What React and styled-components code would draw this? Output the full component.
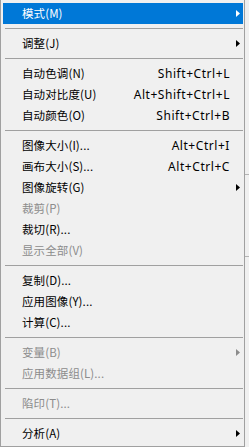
import React from "react";
import styled, { createGlobalStyle } from "styled-components";

const GlobalStyle = createGlobalStyle`
    html, body {
        margin: 0;
        padding: 0;
        background: #f0f0f0;
    }
    body {
        font-family: "Noto Sans CJK SC", "Noto Sans", sans-serif;
        font-size: 11.5px;
    }
`

const StyledPage = styled.div`
    display: flex;
    width: 249px;
    height: 447px;
    overflow: hidden;
`

const StyledMenu = styled.div`
    width: 245px;
    box-sizing: border-box;
    height: 447px;
    padding: 3px 1px 1px 2px;
    border-left: 1px solid #a0a0a0;
    border-right: 1px solid #a0a0a0;
    border-bottom: 1px solid #a0a0a0;
    background: #f0f0f0;
`

const StyledBehind = styled.div`
    flex: 1;
    display: flex;
    flex-direction: column;
`

const StyledTick = styled.div`
    height: 1px;
    margin-top: ${props => props.top}px;
    background: #b4b4b4;
`

const StyledItem = styled.div`
    display: grid;
    grid-template-columns: 1fr auto 13px;
    align-items: center;
    height: 21px;
    padding-left: 19px;
    background: ${props => props.active ? '#0078d7' : 'transparent'};
    color: ${props => props.active ? '#fff' : props.disabled ? '#8c8c8c' : '#000'};
    white-space: nowrap;
    line-height: 21px;
`

const StyledLabel = styled.span`
    letter-spacing: 0.1px;
`

const StyledShortcut = styled.span`
    text-align: right;
    font-family: "Noto Sans", "Noto Sans CJK SC", sans-serif;
    font-size: 12px;
    letter-spacing: 0.55px;
`

const StyledArrow = styled.svg`
    margin-left: 6px;
    display: block;
`

const StyledSeparator = styled.div`
    height: 9px;
    display: flex;
    align-items: center;
    padding-left: 2px;
    &::after {
        content: '';
        flex: 1;
        height: 1px;
        background: #a0a0a0;
    }
`

const menu = [
    {label: '模式(M)', sub: true, active: true},
    '-',
    {label: '调整(J)', sub: true},
    '-',
    {label: '自动色调(N)', key: 'Shift+Ctrl+L'},
    {label: '自动对比度(U)', key: 'Alt+Shift+Ctrl+L'},
    {label: '自动颜色(O)', key: 'Shift+Ctrl+B'},
    '-',
    {label: '图像大小(I)...', key: 'Alt+Ctrl+I'},
    {label: '画布大小(S)...', key: 'Alt+Ctrl+C'},
    {label: '图像旋转(G)', sub: true},
    {label: '裁剪(P)', disabled: true},
    {label: '裁切(R)...'},
    {label: '显示全部(V)', disabled: true},
    '-',
    {label: '复制(D)...'},
    {label: '应用图像(Y)...'},
    {label: '计算(C)...'},
    '-',
    {label: '变量(B)', sub: true, disabled: true},
    {label: '应用数据组(L)...', disabled: true},
    '-',
    {label: '陷印(T)...', disabled: true},
    '-',
    {label: '分析(A)', sub: true},
]

const Arrow = ({color}) => (
    <StyledArrow width="4" height="7" viewBox="0 0 4 7">
        <polygon points="0,0 4,3.5 0,7" fill={color}/>
    </StyledArrow>
)

class App extends React.Component {
    render() {
        return (
            <StyledPage>
                <GlobalStyle/>
                <StyledMenu>
                    {menu.map((item, i) => {
                        if (item === '-') {
                            return <StyledSeparator key={i}/>
                        }
                        const arrowColor = item.active ? '#fff' : item.disabled ? '#8c8c8c' : '#000'
                        return (
                            <StyledItem key={i} active={item.active} disabled={item.disabled}>
                                <StyledLabel>{item.label}</StyledLabel>
                                <StyledShortcut>{item.key || ''}</StyledShortcut>
                                <span>{item.sub && <Arrow color={arrowColor}/>}</span>
                            </StyledItem>
                        )
                    })}
                </StyledMenu>
                <StyledBehind>
                    <StyledTick top={174}/>
                    <StyledTick top={81}/>
                </StyledBehind>
            </StyledPage>
        )
    }
}

export default App
